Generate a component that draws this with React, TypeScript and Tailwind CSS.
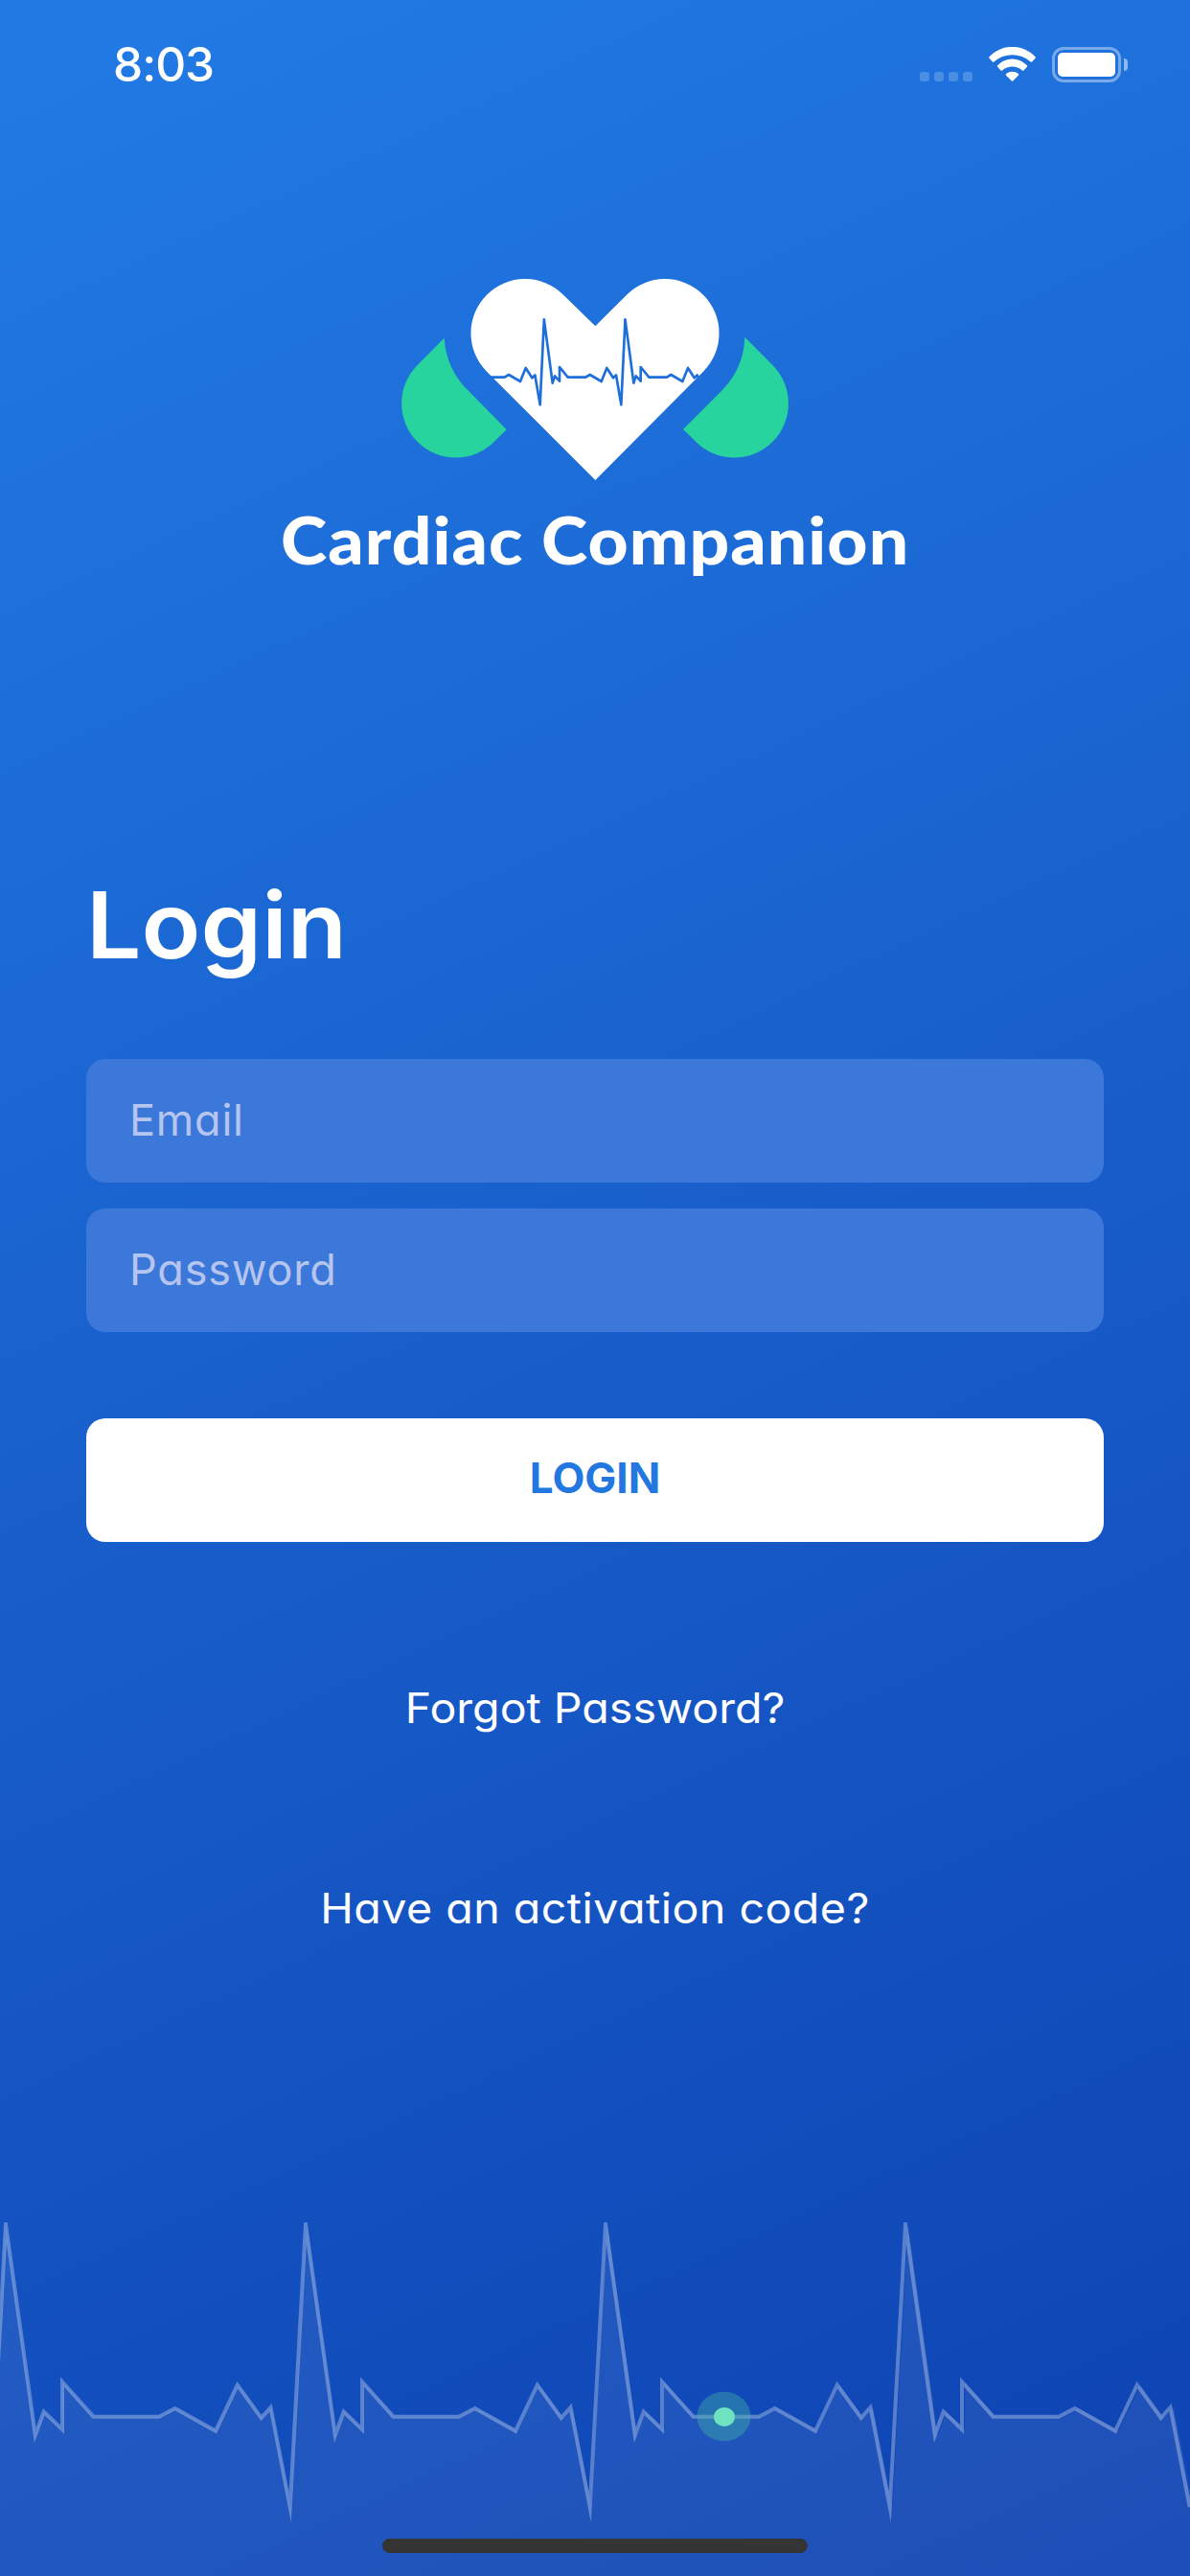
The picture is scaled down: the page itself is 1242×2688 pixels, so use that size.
import { useState } from "react";

type Point = [number, number];

// One heartbeat, measured from the top of the spike. y is relative to the strip.
const BEAT: Point[] = [
  [0, 2],
  [30.8, 222],
  [39.7, 197.5],
  [59, 216],
  [59, 166.5],
  [91.5, 202.7],
  [160, 202.7],
  [176.7, 194],
  [219, 217.6],
  [241.8, 169.7],
  [266.7, 204],
  [276.5, 193],
  [296.7, 297],
];
const BEAT_WIDTH = 313;

const HEART_BEAT: Point[] = [
  [380, 370],
  [393, 362],
  [429, 383],
  [446, 341],
  [466, 372],
  [475, 363],
  [491, 456],
  [503.5, 189],
  [530, 388],
  [537, 366],
  [552, 382],
  [552, 338],
  [578, 370],
];
const HEART_BEAT_WIDTH = 254;

function repeat(points: Point[], width: number, starts: number[]) {
  return starts
    .flatMap((n) => points.map(([x, y]) => `${(x + n * width).toFixed(1)},${y}`))
    .join(" ");
}

function StatusBar() {
  return (
    <div className="flex h-[135px] items-start justify-between pl-[118px] pr-[65px] pt-[49px]">
      <span className="text-[49.5px] font-medium leading-[37px] tracking-[-1px]">8:03</span>
      <div className="flex h-[37px] items-start">
        <div className="mr-[17px] mt-[26px] flex gap-[5px]">
          {[0, 1, 2, 3].map((i) => (
            <span key={i} className="size-[10px] rounded-[3px] bg-white/20" />
          ))}
        </div>
        <svg className="mr-[17px] h-[36px] w-[49px]" viewBox="336 87 147 108" fill="white">
          <path d="M338 117A99 99 0 0 1 481 117Q484 120 481 123L472 133Q469 136 466 133A86 86 0 0 0 353 133Q350 136 347 133L338 123Q335 120 338 117Z" />
          <path d="M364 144A63 63 0 0 1 455 144Q458 147 455 150L446 160Q443 163 440 160A47 47 0 0 0 379 160Q376 163 373 160L364 150Q361 147 364 144Z" />
          <path d="M390 171A32 32 0 0 1 429 171Q431 174 428 177L412 193Q409.500 196 407 193L391 177Q388 174 390 171Z" />
        </svg>
        <div className="flex items-center gap-[3px]">
          <div className="h-[37px] w-[72px] rounded-[12px] border-[3px] border-white/40 p-[3px]">
            <div className="h-[25px] rounded-[5px] bg-white" />
          </div>
          <div className="h-[13px] w-[4px] rounded-r-full bg-white/50" />
        </div>
      </div>
    </div>
  );
}

function Logo() {
  return (
    <svg className="h-[210px] w-[404px]" viewBox="57 62 1212 630">
      <g fill="#27d49d">
        <path d="M191 247A253 253 0 0 0 265 411L386 534L347 572A169 169 0 0 1 107 332Z" />
        <path d="M1132 244A253 253 0 0 1 1061 411L939 533L979 572A169 169 0 0 0 1219 332Z" />
      </g>
      <path
        fill="white"
        d="M664 692L324 352A169 169 0 0 1 564 112L664 210L762 112A169 169 0 0 1 1002 352Z"
      />
      <polyline
        points={`330,370 ${repeat(HEART_BEAT, HEART_BEAT_WIDTH, [0, 1])} 888,370 901,362 937,383 954,341 974,372 983,363 987,374`}
        fill="none"
        stroke="#1f6fdb"
        strokeWidth="8"
        strokeLinejoin="round"
      />
    </svg>
  );
}

function PulseStrip() {
  const line = repeat(BEAT, BEAT_WIDTH, [-1, 0, 1, 2, 3]);
  return (
    <div className="relative h-[369px] w-full">
      <svg className="block h-full w-full" viewBox="0 0 1242 369">
        <g transform="translate(6 0)">
          <polygon
            points={`-313,369 ${line} 1560,369`}
            fill="white"
            fillOpacity="0.065"
            transform="scale(1.003 1)"
          />
          <polyline
            points={line}
            fill="none"
            stroke="white"
            strokeOpacity="0.3"
            strokeWidth="4"
            strokeMiterlimit="20"
          />
        </g>
        <ellipse cx="755.500" cy="202.500" rx="28" ry="25.700" fill="#43b6a6" fillOpacity="0.4" />
        <ellipse cx="756" cy="203" rx="11" ry="10" fill="#6fe3bf" />
      </svg>
      <div className="absolute bottom-[24px] left-[399px] h-[15px] w-[444px] rounded-full bg-[#353535]" />
    </div>
  );
}

const fieldCls =
  "h-[129px] w-full rounded-[20px] bg-[#3c78da] px-[45px] pb-[3px] text-[45px] tracking-[0.8px] text-white outline-none placeholder:text-[#b5c5ee]";

export default function App() {
  const [email, setEmail] = useState("");
  const [password, setPassword] = useState("");

  return (
    <main className="flex h-[2688px] w-[1242px] flex-col overflow-hidden bg-[linear-gradient(155.2deg,#227be5,#0e42b2)] font-['Inter',sans-serif] text-white">
      <StatusBar />

      <header className="mt-[156px] flex flex-col items-center">
        <Logo />
        <h1 className="mt-[22px] scale-x-[1.075] whitespace-nowrap font-['Lato',sans-serif] text-[68px] font-black leading-[80px] tracking-[1px]">
          Cardiac Companion
        </h1>
      </header>

      <form
        className="mt-[307px] flex flex-col px-[90px] [font-feature-settings:'cv11']"
        onSubmit={(e) => e.preventDefault()}
      >
        <h2 className="origin-left scale-x-[1.06] text-[96px] font-semibold leading-[110px]">Login</h2>
        <div className="mt-[85px] flex flex-col gap-[27px]">
          <input
            className={fieldCls}
            placeholder="Email"
            value={email}
            onChange={(e) => setEmail(e.target.value)}
          />
          <input
            className={fieldCls}
            type="password"
            placeholder="Password"
            value={password}
            onChange={(e) => setPassword(e.target.value)}
          />
        </div>
        <button className="mt-[90px] h-[129px] rounded-[20px] bg-white pb-[5px] text-[44px] font-bold text-[#2277e0]">
          LOGIN
        </button>
        <a className="mt-[143px] scale-x-[1.07] text-center text-[43.5px] leading-[60px]">
          Forgot Password?
        </a>
        <a className="mt-[149px] scale-x-[1.07] text-center text-[43.5px] leading-[60px] tracking-[0.45px]">
          Have an activation code?
        </a>
      </form>

      <div className="mt-auto">
        <PulseStrip />
      </div>
    </main>
  );
}
